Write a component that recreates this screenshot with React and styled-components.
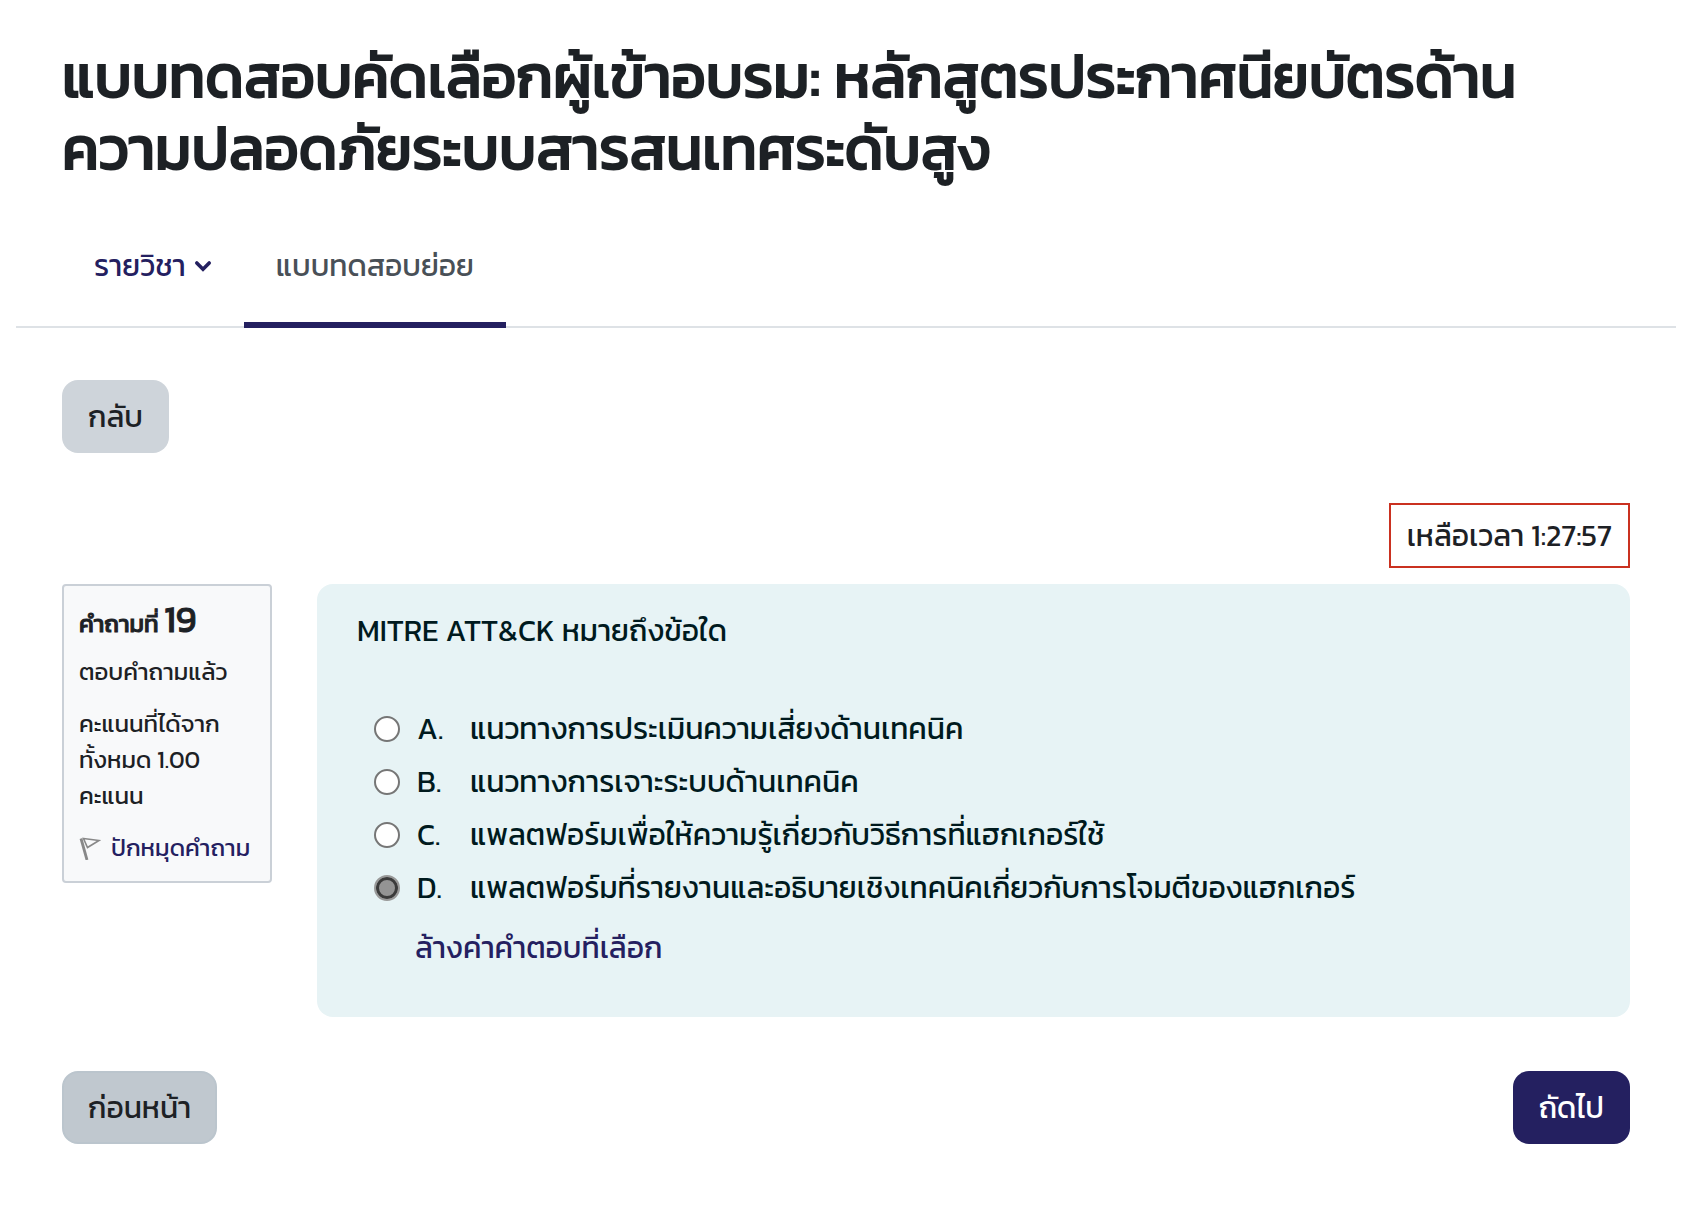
import React, { useState } from 'react'
import styled, { createGlobalStyle } from 'styled-components'

const answers = [
    { letter: 'A.', text: 'แนวทางการประเมินความเสี่ยงด้านเทคนิค' },
    { letter: 'B.', text: 'แนวทางการเจาะระบบด้านเทคนิค' },
    { letter: 'C.', text: 'แพลตฟอร์มเพื่อให้ความรู้เกี่ยวกับวิธีการที่แฮกเกอร์ใช้' },
    { letter: 'D.', text: 'แพลตฟอร์มที่รายงานและอธิบายเชิงเทคนิคเกี่ยวกับการโจมตีของแฮกเกอร์' },
]

export default function App() {
    const [selected, setSelected] = useState('D.')

    const handleClear = (e) => {
        e.preventDefault()
        setSelected('')
    }

    return (
        <Page>
            <GlobalStyle />
            <Title>แบบทดสอบคัดเลือกผู้เข้าอบรม: หลักสูตรประกาศนียบัตรด้านความปลอดภัยระบบสารสนเทศระดับสูง</Title>
            <Tabs>
                <Tab href="#course">
                    รายวิชา
                    <Chevron viewBox="0 0 18 12" aria-hidden="true">
                        <path d="M2.8 3 L9 9.2 L15.2 3" />
                    </Chevron>
                </Tab>
                <Tab href="#quiz" $active>แบบทดสอบย่อย</Tab>
            </Tabs>
            <Content>
                <Button type="button">กลับ</Button>
                <TimerRow>
                    <Timer>เหลือเวลา 1:27:57</Timer>
                </TimerRow>
                <Question>
                    <Info>
                        <InfoTitle>คำถามที่ <Number>19</Number></InfoTitle>
                        <InfoText>ตอบคำถามแล้ว</InfoText>
                        <InfoText>คะแนนที่ได้จากทั้งหมด 1.00 คะแนน</InfoText>
                        <FlagLink href="#flag">
                            <Flag viewBox="0 0 22 24" aria-hidden="true">
                                <path d="M2 2.5 L8 24" strokeWidth="2.8" />
                                <path d="M4.5 2.5 L20 4.5 L8.5 11.5 Z" strokeWidth="1.6" />
                            </Flag>
                            ปักหมุดคำถาม
                        </FlagLink>
                    </Info>
                    <Formulation>
                        <Legend id="question">MITRE ATT&amp;CK หมายถึงข้อใด</Legend>
                        <Answers role="radiogroup" aria-labelledby="question">
                            {answers.map(({ letter, text }) => (
                                <Answer key={letter}>
                                    <Radio
                                        type="radio"
                                        name="answer"
                                        checked={selected === letter}
                                        onChange={() => setSelected(letter)}
                                    />
                                    <Letter>{letter}</Letter>
                                    <span>{text}</span>
                                </Answer>
                            ))}
                        </Answers>
                        <ClearLink href="#clear" onClick={handleClear}>ล้างค่าคำตอบที่เลือก</ClearLink>
                    </Formulation>
                </Question>
                <Footer>
                    <Button type="button" $variant="previous">ก่อนหน้า</Button>
                    <Button type="button" $variant="primary">ถัดไป</Button>
                </Footer>
            </Content>
        </Page>
    )
}

const GlobalStyle = createGlobalStyle`
  * {
    box-sizing: border-box;
  }

  body {
    margin: 0;
    background: #fff;
    color: #1d2125;
    font-family: Kanit, "Noto Sans Thai", "Noto Sans", sans-serif;
    font-size: 30px;
    line-height: 45px;
  }

  a {
    color: #242060;
    text-decoration: none;
  }
`

const Page = styled.main`
  padding: 40px 10px 60px 16px;
`

const Title = styled.h1`
  margin: 0;
  padding: 0 46px;
  font-size: 60px;
  font-weight: 400;
  line-height: 72px;
  -webkit-text-stroke: 2px currentColor;
`

const Tabs = styled.nav`
  display: flex;
  margin-top: 20px;
  padding-left: 46px;
  border-bottom: 2px solid #dee2e6;
`

const Tab = styled.a`
  display: flex;
  align-items: center;
  gap: 8px;
  height: 124px;
  margin-bottom: -2px;
  padding: 5px 32px 0;
  border-bottom: 6px solid ${({ $active }) => ($active ? '#242060' : 'transparent')};
  color: ${({ $active }) => ($active ? '#495057' : '#242060')};
`

const Chevron = styled.svg`
  width: 18px;
  height: 12px;
  fill: none;
  stroke: currentColor;
  stroke-width: 3.6;
  stroke-linecap: round;
`

const Content = styled.div`
  padding: 52px 46px 0;
`

const variants = {
    secondary: 'background: #ced4da; color: #1d2125;',
    previous: 'background: #c0c8cf; color: #1d2125; border-color: #bbc5cd;',
    primary: 'background: #242060; color: #fff;',
}

const Button = styled.button`
  height: 73px;
  padding: 0 24px;
  border: 2px solid transparent;
  border-radius: 16px;
  font: inherit;
  cursor: pointer;
  ${({ $variant = 'secondary' }) => variants[$variant]}
`

const TimerRow = styled.div`
  display: flex;
  justify-content: flex-end;
  margin: 50px 0 16px;
`

const Timer = styled.div`
  padding: 8px 16px;
  border: 2px solid #ca3120;
`

const Question = styled.section`
  display: flex;
  align-items: flex-start;
  gap: 45px;
`

const Info = styled.aside`
  flex: none;
  width: 210px;
  padding: 11px 15px 15px;
  border: 2px solid #cad0d7;
  border-radius: 4px;
  background: #f8f9fa;
  font-size: 24px;
  line-height: 36px;
`

const InfoTitle = styled.h2`
  margin: 0;
  font-size: 24px;
  font-weight: 400;
  line-height: 44px;
  -webkit-text-stroke: 1px currentColor;
`

const Number = styled.span`
  font-size: 36px;
`

const InfoText = styled.p`
  margin: 8px 0 16px;
`

const FlagLink = styled.a`
  display: flex;
  align-items: center;
  gap: 10px;
  white-space: nowrap;
`

const Flag = styled.svg`
  width: 22px;
  height: 24px;
  fill: none;
  stroke: #888;
`

const Formulation = styled.div`
  flex: 1;
  min-width: 0;
  padding: 24px 40px 47px;
  border-radius: 16px;
  background: #e7f3f5;
  color: #001a1e;
`

const Legend = styled.p`
  margin: 0;
`

const Answers = styled.div`
  margin: 49px 0 11px 17px;
`

const Answer = styled.label`
  display: flex;
  align-items: center;
  height: 53px;
`

const Radio = styled.input`
  appearance: none;
  flex: none;
  width: 26px;
  height: 26px;
  margin: 0 17px 0 0;
  border: 2px solid #767676;
  border-radius: 50%;
  background: #fff;

  &:checked {
    border-color: #999;
    background: #949494;
    box-shadow: inset 0 0 0 3px #3b3b3b;
  }
`

const Letter = styled.span`
  flex: none;
  width: 53px;
`

const ClearLink = styled.a`
  margin-left: 58px;
`

const Footer = styled.div`
  display: flex;
  justify-content: space-between;
  margin-top: 54px;
`
